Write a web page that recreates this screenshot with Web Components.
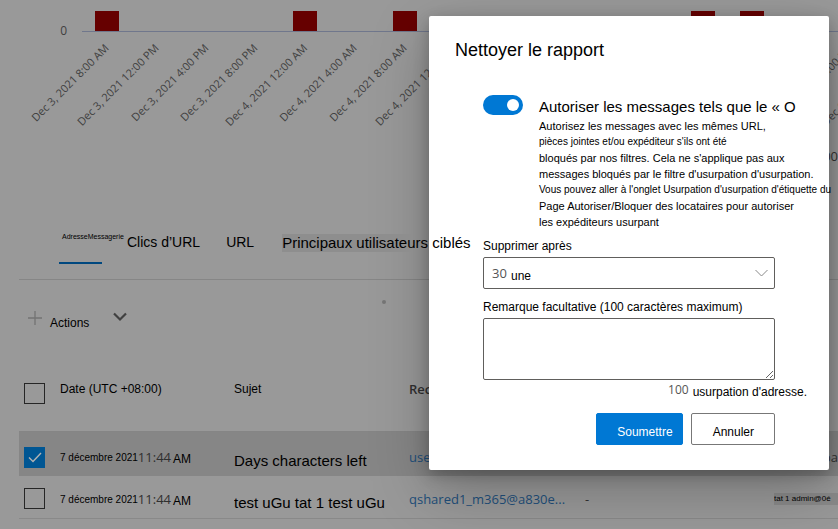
<!DOCTYPE html>
<html lang="fr">
<head>
<meta charset="utf-8">
<title>Nettoyer le rapport</title>
<style>
  html, body { margin: 0; min-height: 100%; background: #999; }
  body { color: #000; font: 12px/16px "Liberation Sans", Arial, sans-serif; overflow: hidden; }
</style>
</head>
<body>
<report-page></report-page>
<script>
const define = (name, html, setup) => {
  const tpl = document.createElement('template');
  tpl.innerHTML = '<style>*{box-sizing:border-box}</style>' + html;
  customElements.define(name, class extends HTMLElement {
    constructor() {
      super();
      this.attachShadow({ mode: 'open' }).append(tpl.content.cloneNode(true));
    }
    connectedCallback() { if (setup) setup(this, this.shadowRoot); }
  });
};

define('bar-chart', `
<style>
  :host { display: block; overflow: hidden; height: 200px; padding-top: 11px; font: 12px/16px "Open Sans", sans-serif; color: #404040; }
  .plot { display: flex; gap: 15px; }
  .zero { width: 67px; text-align: right; padding-top: 12px; }
  .slots { flex: 1; min-width: 0; display: grid; grid-auto-flow: column; grid-auto-columns: calc(100% / 15.22); }
  .slot { border-bottom: 1px solid #70778c; height: 21px; position: relative; display: flex; justify-content: center; }
  .bar { width: 24px; height: 20px; background: #660000; }
  .label { position: absolute; right: 50%; top: 27px; font-size: 11px; white-space: nowrap; transform-origin: center right; transform: rotate(-45deg); }
  .legend { text-align: right; font-size: 13px; color: #333; margin-top: 109px; }
</style>
<div class="plot"><div class="zero">0</div><div class="slots"></div></div>
<div class="legend">00</div>`,
(host, root) => {
  const labels = ['Dec 3, 2021 8:00 AM', 'Dec 3, 2021 12:00 PM', 'Dec 3, 2021 4:00 PM', 'Dec 3, 2021 8:00 PM',
    'Dec 4, 2021 12:00 AM', 'Dec 4, 2021 4:00 AM', 'Dec 4, 2021 8:00 AM', 'Dec 4, 2021 12:00 PM',
    '', '', '', '', '', '', '', 'Dec 5, 2021 8:00 PM', 'Dec 6, 2021 12:00 AM'];
  const bars = [0, 4, 6, 12, 13];
  root.querySelector('.slots').innerHTML = labels.map((t, i) =>
    `<div class="slot">${bars.includes(i) ? '<div class="bar"></div>' : ''}${t ? `<span class="label">${t}</span>` : ''}</div>`).join('');
});

define('report-tabs', `
<style>
  :host { display: block; margin-left: 19px; height: 80px; border-bottom: 1px solid #868686; }
  nav { display: flex; padding: 28px 0 0 40px; }
  a { color: #000; text-decoration: none; white-space: nowrap; font-size: 14px; line-height: 28px; height: 36px; }
  .current { width: 43px; border-bottom: 2px solid #00487f; font-size: 7px; line-height: 18px; padding-left: 3px; margin-right: 25px; }
  .url { margin: 0 28px 0 26px; }
  .top { font-size: 15px; position: relative; z-index: 2; line-height: 18px; height: 18px; margin-top: 6px;
    background: linear-gradient(#8e8e8e, #8e8e8e) 0 0 / 130px 18px no-repeat; }
</style>
<nav aria-label="Vues">
  <a class="current" href="#messages" aria-current="page">AdresseMessagerie</a>
  <a href="#clics">Clics d’URL</a>
  <a class="url" href="#url">URL</a>
  <a class="top" href="#cibles">Principaux utilisateurs ciblés</a>
</nav>`);

define('action-bar', `
<style>
  :host { display: flex; justify-content: space-between; height: 84px; padding: 20px 0 0 28px; }
  button { all: unset; display: flex; height: 40px; cursor: pointer; font-size: 12px; }
  svg { fill: none; }
  .plus { stroke: #737373; stroke-width: 1.3; margin: 11px 8px 0 0; }
  .chev { stroke: #404040; stroke-width: 2.2; margin: 12px 0 0 24px; }
  span { padding-top: 15px; }
  i { flex: 1; }
  i::before { content: ""; display: block; width: 4px; height: 4px; border-radius: 50%; background: #767676; margin-left: 255px; }
</style>
<button type="button">
  <svg class="plus" width="14" height="14" viewBox="0 0 14 14"><path d="M7 0V14M0 7H14"/></svg>
  <span>Actions</span>
  <svg class="chev" width="14" height="10" viewBox="0 0 14 10"><path d="M1 1.5L7 7.5L13 1.5"/></svg>
</button><i></i>`);

define('message-table', `
<style>
  :host { display: block; margin-left: 19px; }
  table { width: 100%; table-layout: fixed; border-collapse: collapse; }
  th, td { padding: 0; font-weight: 400; text-align: left; white-space: nowrap; vertical-align: top; overflow: hidden; }
  .check { width: 41px; } .date { width: 174px; } .subj { width: 175px; } .rcpt { width: 176px; } .dash { width: 189px; }
  thead tr { height: 67px; border-bottom: 1px solid #858585; }
  tbody tr { height: 42px; border-bottom: 1px solid #898989; }
  tbody tr.on { height: 45px; background: #868686; border-bottom: 0; }
  thead th { padding-top: 17px; }
  thead .check { padding-top: 19px; }
  tbody td { padding-top: 15px; }
  tbody .check { padding-top: 12px; }
  .on td { padding-top: 17px; }
  .on .check { padding-top: 15px; }
  input { appearance: none; display: block; width: 21px; height: 21px; margin: 0 0 0 5px; border: 1px solid #262626; }
  input:checked { border: 0; background: #005693; }
  .mark { display: grid; width: 26px; }
  .mark > * { grid-area: 1 / 1; }
  .mark svg { margin: 5px 0 0 9px; pointer-events: none; fill: none; stroke: #b3b3b3; stroke-width: 1.4; }
  .when { display: flex; font-size: 10px; line-height: 18px; }
  .when time { font: 13px/16px "Open Sans", sans-serif; color: #303030; }
  .when b { font-weight: 400; font-size: 12px; padding: 1px 0 0 2px; }
  .title { font-size: 15px; line-height: 24px; display: block; }
  .seg { font: 13px/16px "Open Sans", sans-serif; color: #333; }
  a { color: #214f7b; text-decoration: none; font: 13px/16px "Open Sans", sans-serif; }
  strong { font: 600 13px/16px "Open Sans", sans-serif; color: #303030; }
  .r { text-align: right; }
  small { display: block; background: #8a8a8a; font-size: 8px; line-height: 12px; margin-top: 2px; }
</style>
<table>
  <thead><tr>
    <th class="check"><input type="checkbox" aria-label="Tout sélectionner"></th>
    <th class="date">Date (UTC +08:00)</th><th class="subj">Sujet</th>
    <th class="rcpt"><strong>Rec</strong></th><th class="dash"></th><th></th>
  </tr></thead>
  <tbody>
    <tr class="on">
      <td class="check"><div class="mark"><input type="checkbox" checked aria-label="Days characters left"><svg width="14" height="11" viewBox="0 0 14 11"><path d="M1 5.5L5 9.5L13 1"/></svg></div></td>
      <td><div class="when">7 décembre 2021<time>11:44</time><b>AM</b></div></td>
      <td><span class="title">Days characters left</span></td>
      <td><a href="#user">use</a></td><td></td>
      <td class="r"><span class="seg">pa</span></td>
    </tr>
    <tr>
      <td class="check"><input type="checkbox" aria-label="test uGu tat 1 test uGu"></td>
      <td><div class="when">7 décembre 2021<time>11:44</time><b>AM</b></div></td>
      <td><span class="title">test uGu tat 1 test uGu</span></td>
      <td><a href="#qshared">qshared1_m365@a830e...</a></td>
      <td><span class="seg">-</span></td>
      <td><small>tat 1 admin@0é</small></td>
    </tr>
  </tbody>
</table>`);

define('toggle-switch', `
<style>
  :host { display: block; }
  input { appearance: none; display: flex; align-items: center; justify-content: flex-end; width: 40px; height: 20px; margin: 0; padding: 4px; border-radius: 10px; background: #0078d4; }
  input::before { content: ""; width: 12px; height: 12px; border-radius: 50%; background: #fff; }
</style>
<input type="checkbox" role="switch" checked aria-label="Autoriser les messages">`);

define('clean-dialog', `
<style>
  :host { display: block; position: absolute; z-index: 1; top: 16px; right: 9px; width: 400px; background: #fff; border-radius: 2px;
    padding: 23px 0 25px 26px; box-shadow: 0 20px 58px rgba(0,0,0,.25), 0 5px 16px rgba(0,0,0,.24); }
  h2 { margin: 0; font: 18px/22px "Liberation Sans", Arial, sans-serif; }
  form { padding-left: 28px; }
  .allow { display: grid; grid-template-columns: 56px 1fr; padding-top: 34px; }
  .allow h3 { margin: 0; font-weight: 400; font-size: 15px; line-height: 24px; height: 23px; }
  p { margin: 0; white-space: nowrap; font-size: 11px; line-height: 16px; }
  p.s { font-size: 10px; }
  label { display: block; line-height: 16px; }
  .after { padding-top: 8px; }
  .pick { position: relative; margin: 3px 54px 10px 0; }
  select { appearance: none; display: block; width: 100%; height: 32px; border: 1px solid #605e5c; border-radius: 2px; background: #fff; color: #555; padding: 0 8px; font: 13px/18px "Open Sans", sans-serif; }
  .unit { position: absolute; left: 28px; top: 11px; pointer-events: none; }
  .pick svg { position: absolute; right: 7px; top: 12px; fill: none; stroke: #888; pointer-events: none; }
  textarea { display: block; width: calc(100% - 54px); height: 62px; margin-top: 3px; border: 1px solid #605e5c; border-radius: 2px; resize: vertical; }
  .count { display: flex; justify-content: flex-end; gap: 4px; padding: 2px 22px 0 0; height: 33px; }
  .count span { font: 12px/16px "Open Sans", sans-serif; color: #555; }
  .count em { font-style: normal; padding-top: 2px; }
  .foot { display: flex; justify-content: flex-end; gap: 8px; padding-right: 54px; }
  button { height: 32px; border-radius: 2px; font: 12px/16px "Liberation Sans", Arial, sans-serif; padding: 5px 20px 0 21px; border: 1px solid #777; background: #fff; color: #000; }
  .go { background: #0078d4; border-color: #0078d4; color: #fff; padding: 5px 9px 0 20px; }
</style>
<h2>Nettoyer le rapport</h2>
<form>
  <div class="allow">
    <toggle-switch></toggle-switch>
    <div>
      <h3>Autoriser les messages tels que le « O</h3>
      <p>Autorisez les messages avec les mêmes URL,</p>
      <p class="s">pièces jointes et/ou expéditeur s'ils ont été</p>
      <p>bloqués par nos filtres. Cela ne s'applique pas aux</p>
      <p>messages bloqués par le filtre d'usurpation d'usurpation.</p>
      <p class="s">Vous pouvez aller à l'onglet Usurpation d'usurpation d'étiquette du</p>
      <p>Page Autoriser/Bloquer des locataires pour autoriser</p>
      <p>les expéditeurs usurpant</p>
    </div>
  </div>
  <label class="after" for="days">Supprimer après</label>
  <div class="pick"><select id="days"><option>30</option></select><span class="unit">une</span>
    <svg width="13" height="8" viewBox="0 0 13 8"><path d="M.5 1L6.5 7L12.5 1"/></svg></div>
  <label for="note">Remarque facultative (100 caractères maximum)</label>
  <textarea id="note"></textarea>
  <div class="count"><span>100</span><em>usurpation d'adresse.</em></div>
  <div class="foot"><button class="go" type="button">Soumettre</button><button type="button">Annuler</button></div>
</form>`);

define('report-page', `
<style>:host { display: block; }</style>
<bar-chart></bar-chart>
<report-tabs></report-tabs>
<action-bar></action-bar>
<message-table></message-table>
<clean-dialog role="dialog" aria-label="Nettoyer le rapport"></clean-dialog>`);
</script>
</body>
</html>
